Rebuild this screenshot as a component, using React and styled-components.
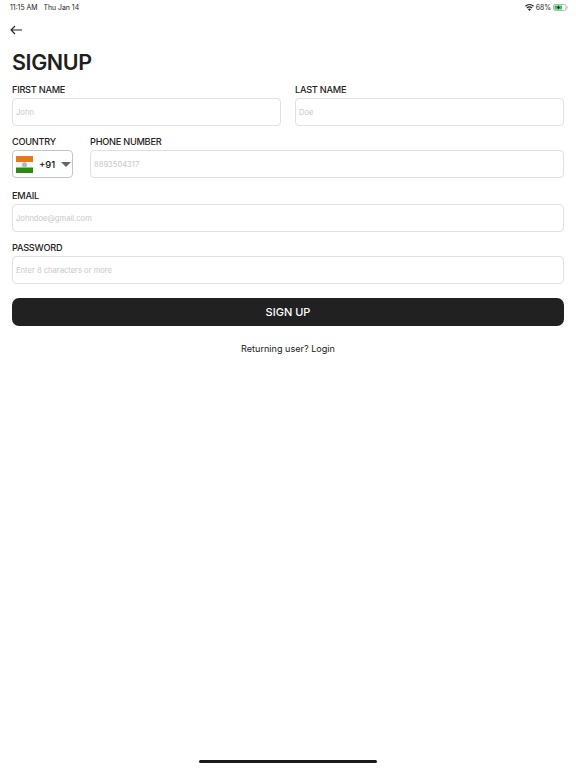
import React from "react"
import styled, { createGlobalStyle } from "styled-components"

const GlobalStyle = createGlobalStyle`
    html, body {
        margin: 0;
        padding: 0;
        background: #fff;
        font-family: Inter, "Liberation Sans", sans-serif;
        color: #1f1f1f;
    }
    input::placeholder {
        color: #c8c8c8;
        opacity: 1;
    }
`

const Page = styled.div`
    width: 576px;
    height: 768px;
    position: relative;
    overflow: hidden;
`

const StatusBar = styled.div`
    height: 14px;
    padding: 0 8px 0 10px;
    display: flex;
    align-items: center;
    justify-content: space-between;
    font-size: 6.9px;
    color: #222;
`

const StatusGroup = styled.div`
    display: flex;
    align-items: center;
    gap: ${props => props.gap || 2}px;
`

const BackButton = styled.button`
    display: block;
    border: 0;
    background: none;
    padding: 0;
    margin: 9px 0 0 10px;
    height: 14px;
    width: 12px;
`

const Title = styled.h1`
    margin: 11px 0 0 12px;
    font-size: 21.5px;
    line-height: 28px;
    font-weight: 600;
    letter-spacing: -0.4px;
`

const Form = styled.div`
    padding: 7px 12px 0;
    display: flex;
    flex-direction: column;
`

const Row = styled.div`
    display: flex;
    gap: ${props => props.gap}px;
    margin-top: ${props => props.top || 0}px;
`

const Field = styled.div`
    flex: ${props => props.fixed ? "0 0 " + props.fixed + "px" : "1 1 0"};
    min-width: 0;
`

const Label = styled.div`
    font-size: 9.2px;
    line-height: 13px;
    margin-bottom: 2px;
    letter-spacing: -0.25px;
    font-weight: 450;
    color: #222;
`

const Input = styled.input`
    display: block;
    width: 100%;
    box-sizing: border-box;
    height: 28px;
    border: 1px solid #e0e0e0;
    border-radius: 4px;
    padding: 0 3px;
    font-family: inherit;
    font-size: 7.6px;
    outline: none;
`

const CountrySelect = styled.div`
    box-sizing: border-box;
    height: 28px;
    border: 1px solid #c4c4c4;
    border-radius: 4px;
    display: flex;
    align-items: center;
    padding: 0 1px 0 3px;
    font-size: 9.5px;
    font-weight: 500;
    color: #111;
`

const FlagIcon = styled.svg`
    flex: none;
`

const Code = styled.span`
    margin-left: 6px;
`

const Caret = styled.span`
    flex: none;
    margin-left: 6px;
    width: 0;
    height: 0;
    border-left: 5px solid transparent;
    border-right: 5px solid transparent;
    border-top: 5px solid #666;
`

const SubmitButton = styled.button`
    margin-top: 14px;
    height: 28px;
    border: 0;
    border-radius: 7px;
    background: #212121;
    color: #fff;
    font-family: inherit;
    font-size: 11px;
    font-weight: 500;
`

const LoginLink = styled.div`
    margin-top: 16px;
    text-align: center;
    font-size: 9.1px;
    line-height: 13px;
    color: #222;
`

const HomeBar = styled.div`
    position: absolute;
    left: 199px;
    bottom: 5px;
    width: 178px;
    height: 3px;
    border-radius: 2px;
    background: #1a1a1a;
`

const Flag = () => (
    <FlagIcon width="17" height="17" viewBox="0 0 17 17">
        <rect width="17" height="6" fill="#e8791a" />
        <rect y="6" width="17" height="5.5" fill="#f4f4f4" />
        <rect y="11.5" width="17" height="5.5" fill="#2f8a12" />
        <circle cx="8.5" cy="8.7" r="2.5" fill="#a9b7d0" />
    </FlagIcon>
)

const Wifi = () => (
    <svg width="9" height="7" viewBox="0 0 18 14" fill="#222">
        <path d="M9 14 L6 10.4 a4.6 4.6 0 0 1 6 0 Z" />
        <path d="M4.6 8.8 L3 6.9 a9.2 9.2 0 0 1 12 0 L13.4 8.8 a6.8 6.8 0 0 0 -8.8 0 Z" />
        <path d="M1.6 5.3 L0 3.4 a13.8 13.8 0 0 1 18 0 L16.4 5.3 a11.4 11.4 0 0 0 -14.8 0 Z" />
    </svg>
)

const Battery = () => (
    <svg width="15" height="7" viewBox="0 0 15 7">
        <rect x="0.5" y="0.5" width="12.5" height="6" rx="1.5" fill="none" stroke="#b5b5b5" />
        <rect x="1.5" y="1.5" width="7.5" height="4" fill="#34c759" />
        <path d="M5.8 1 L3.8 3.8 H5.2 L4.8 6 L7 3 H5.6 Z" fill="#111" />
        <rect x="13.6" y="2.4" width="1" height="2.2" fill="#b5b5b5" />
    </svg>
)

const BackArrow = () => (
    <svg width="12" height="10" viewBox="0 0 12 10" fill="none" stroke="#222" strokeWidth="1.1">
        <path d="M12 5 H1 M5 1 L1 5 L5 9" />
    </svg>
)

export default class App extends React.Component {
    render(){
        return (
            <Page>
                <GlobalStyle />
                <StatusBar>
                    <StatusGroup gap={6}>
                        <span>11:15 AM</span>
                        <span>Thu Jan 14</span>
                    </StatusGroup>
                    <StatusGroup>
                        <Wifi />
                        <span>68%</span>
                        <Battery />
                    </StatusGroup>
                </StatusBar>
                <BackButton><BackArrow /></BackButton>
                <Title>SIGNUP</Title>
                <Form>
                    <Row gap={14}>
                        <Field>
                            <Label>FIRST NAME</Label>
                            <Input placeholder="John" />
                        </Field>
                        <Field>
                            <Label>LAST NAME</Label>
                            <Input placeholder="Doe" />
                        </Field>
                    </Row>
                    <Row gap={17} top={9}>
                        <Field fixed={61}>
                            <Label>COUNTRY</Label>
                            <CountrySelect>
                                <Flag />
                                <Code>+91</Code>
                                <Caret />
                            </CountrySelect>
                        </Field>
                        <Field>
                            <Label>PHONE NUMBER</Label>
                            <Input placeholder="8893504317" />
                        </Field>
                    </Row>
                    <Row top={11}>
                        <Field>
                            <Label>EMAIL</Label>
                            <Input placeholder="Johndoe@gmail.com" />
                        </Field>
                    </Row>
                    <Row top={9}>
                        <Field>
                            <Label>PASSWORD</Label>
                            <Input placeholder="Enter 8 characters or more" />
                        </Field>
                    </Row>
                    <SubmitButton>SIGN UP</SubmitButton>
                    <LoginLink>Returning user? Login</LoginLink>
                </Form>
                <HomeBar />
            </Page>
        )
    }
}
